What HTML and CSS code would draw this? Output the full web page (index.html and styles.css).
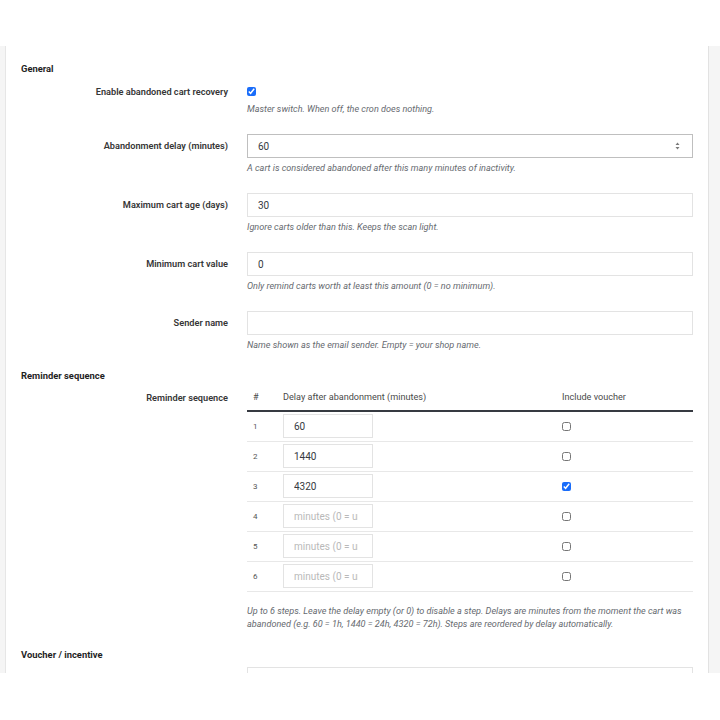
FILE: index.html
```html
<!DOCTYPE html>
<html lang="en">
<head>
<meta charset="utf-8">
<title>Abandoned cart recovery</title>
<link rel="stylesheet" href="styles.css">
</head>
<body>
<div class="frame">
  <div class="panel">
    <h3 class="section">General</h3>

    <div class="row row-check">
      <div class="label">Enable abandoned cart recovery</div>
      <div class="field">
        <div class="check-line"><input type="checkbox" class="cb" checked></div>
        <p class="help">Master switch. When off, the cron does nothing.</p>
      </div>
    </div>

    <div class="row">
      <div class="label">Abandonment delay (minutes)</div>
      <div class="field">
        <div class="num">
          <input type="text" class="num-input" value="60">
          <svg class="spin" width="5" height="8" viewBox="0 0 5 8"><path d="M2.5 0.5 L4.5 3 L0.5 3 Z M0.5 5 L4.5 5 L2.5 7.5 Z" fill="#7a7a7a"/></svg>
        </div>
        <p class="help">A cart is considered abandoned after this many minutes of inactivity.</p>
      </div>
    </div>

    <div class="row">
      <div class="label">Maximum cart age (days)</div>
      <div class="field">
        <input type="text" class="input" value="30">
        <p class="help">Ignore carts older than this. Keeps the scan light.</p>
      </div>
    </div>

    <div class="row">
      <div class="label">Minimum cart value</div>
      <div class="field">
        <input type="text" class="input" value="0">
        <p class="help">Only remind carts worth at least this amount (0 = no minimum).</p>
      </div>
    </div>

    <div class="row">
      <div class="label">Sender name</div>
      <div class="field">
        <input type="text" class="input" value="">
        <p class="help">Name shown as the email sender. Empty = your shop name.</p>
      </div>
    </div>

    <h3 class="section section-seq">Reminder sequence</h3>

    <div class="row row-table">
      <div class="label">Reminder sequence</div>
      <div class="field">
        <table class="seq">
          <thead>
            <tr><th class="c-n">#</th><th class="c-d">Delay after abandonment (minutes)</th><th class="c-v">Include voucher</th></tr>
          </thead>
          <tbody>
            <tr><td class="n">1</td><td><input type="text" class="delay" value="60" placeholder="minutes (0 = unused)"></td><td><input type="checkbox" class="cb"></td></tr>
            <tr><td class="n">2</td><td><input type="text" class="delay" value="1440" placeholder="minutes (0 = unused)"></td><td><input type="checkbox" class="cb"></td></tr>
            <tr><td class="n">3</td><td><input type="text" class="delay" value="4320" placeholder="minutes (0 = unused)"></td><td><input type="checkbox" class="cb" checked></td></tr>
            <tr><td class="n">4</td><td><input type="text" class="delay" value="" placeholder="minutes (0 = unused)"></td><td><input type="checkbox" class="cb"></td></tr>
            <tr><td class="n">5</td><td><input type="text" class="delay" value="" placeholder="minutes (0 = unused)"></td><td><input type="checkbox" class="cb"></td></tr>
            <tr><td class="n">6</td><td><input type="text" class="delay" value="" placeholder="minutes (0 = unused)"></td><td><input type="checkbox" class="cb"></td></tr>
          </tbody>
        </table>
        <p class="help help-table">Up to 6 steps. Leave the delay empty (or 0) to disable a step. Delays are minutes from the moment the cart was abandoned (e.g. 60 = 1h, 1440 = 24h, 4320 = 72h). Steps are reordered by delay automatically.</p>
      </div>
    </div>

    <h3 class="section section-voucher">Voucher / incentive</h3>

    <div class="row row-voucher">
      <div class="label"></div>
      <div class="field">
        <input type="text" class="input" value="">
      </div>
    </div>
  </div>
</div>
</body>
</html>
```

FILE: styles.css
```css
* {
  box-sizing: border-box;
}

body {
  margin: 0;
  background: #ffffff;
  font-family: Roboto, "Liberation Sans", Arial, sans-serif;
  color: #363a41;
}

.frame {
  margin-top: 46px;
  height: 627px;
  overflow: hidden;
  background: #f5f5f5;
  padding: 0 11px 0 5px;
}

.panel {
  height: 100%;
  background: #ffffff;
  border-left: 1px solid #e6e6e6;
  border-right: 1px solid #e2e2e2;
  padding: 16px 15px 0 15px;
}

.section {
  margin: 0;
  font-size: 9.4px;
  font-weight: 700;
  line-height: 13px;
  color: #1f1f1f;
}

.section-seq {
  margin-top: 17px;
}

.section-voucher {
  margin-top: 16px;
}

.row {
  display: grid;
  grid-template-columns: 207px 446px;
  column-gap: 19px;
  margin-top: 18px;
}

.row-check {
  margin-top: 10px;
}

.row-table {
  margin-top: 2px;
}

.row-voucher {
  margin-top: 6px;
}

.label {
  text-align: right;
  font-size: 9.2px;
  font-weight: 600;
  line-height: 24px;
  color: #363636;
}

.row-check .label {
  line-height: 13px;
}

.row-table .label {
  line-height: 13px;
  padding-top: 7px;
}

.check-line {
  height: 13px;
  display: flex;
  align-items: center;
}

.cb {
  display: block;
  width: 9px;
  height: 9px;
  margin: 0;
  accent-color: #1a6dfa;
}

.help {
  margin: 4px 0 0;
  font-size: 9.1px;
  font-style: italic;
  line-height: 13px;
  color: #666a6f;
}

.row-check .help {
  margin-top: 5px;
}

.input {
  display: block;
  width: 100%;
  height: 24px;
  margin: 0;
  border: 1px solid #e3e3e3;
  border-radius: 0;
  padding: 0 10px;
  font-family: inherit;
  font-size: 10px;
  color: #363a41;
  background: #ffffff;
  outline: none;
}

.num {
  display: flex;
  align-items: center;
  height: 24px;
  border: 1px solid #bfbfbf;
  padding: 0 12px 0 10px;
  background: #ffffff;
}

.num-input {
  flex: 1;
  min-width: 0;
  border: 0;
  padding: 0;
  margin: 0;
  font-family: inherit;
  font-size: 10px;
  color: #363a41;
  background: transparent;
  outline: none;
}

.spin {
  display: block;
  flex: none;
}

.seq {
  width: 100%;
  border-collapse: collapse;
  table-layout: fixed;
}

.seq th {
  text-align: left;
  font-weight: 400;
  font-size: 9.1px;
  line-height: 13px;
  color: #4a4a4a;
  padding: 7px 6px 6px;
  border-bottom: 2px solid #363a41;
  white-space: nowrap;
}

.seq .c-n {
  width: 30px;
}

.seq .c-d {
  width: 279px;
}

.seq td {
  padding: 2px 6px 3px;
  border-bottom: 1px solid #e8e8e8;
  vertical-align: middle;
}

.seq td.n {
  font-size: 8px;
  color: #555555;
}

.delay {
  display: block;
  width: 90px;
  height: 24px;
  margin: 0;
  border: 1px solid #e3e3e3;
  border-radius: 0;
  padding: 0 14px 0 10px;
  font-family: inherit;
  font-size: 10px;
  color: #363a41;
  background: #ffffff;
  outline: none;
}

.delay::placeholder {
  color: #b9b9b9;
}

.help-table {
  margin-top: 13px;
  line-height: 13.3px;
}
```
